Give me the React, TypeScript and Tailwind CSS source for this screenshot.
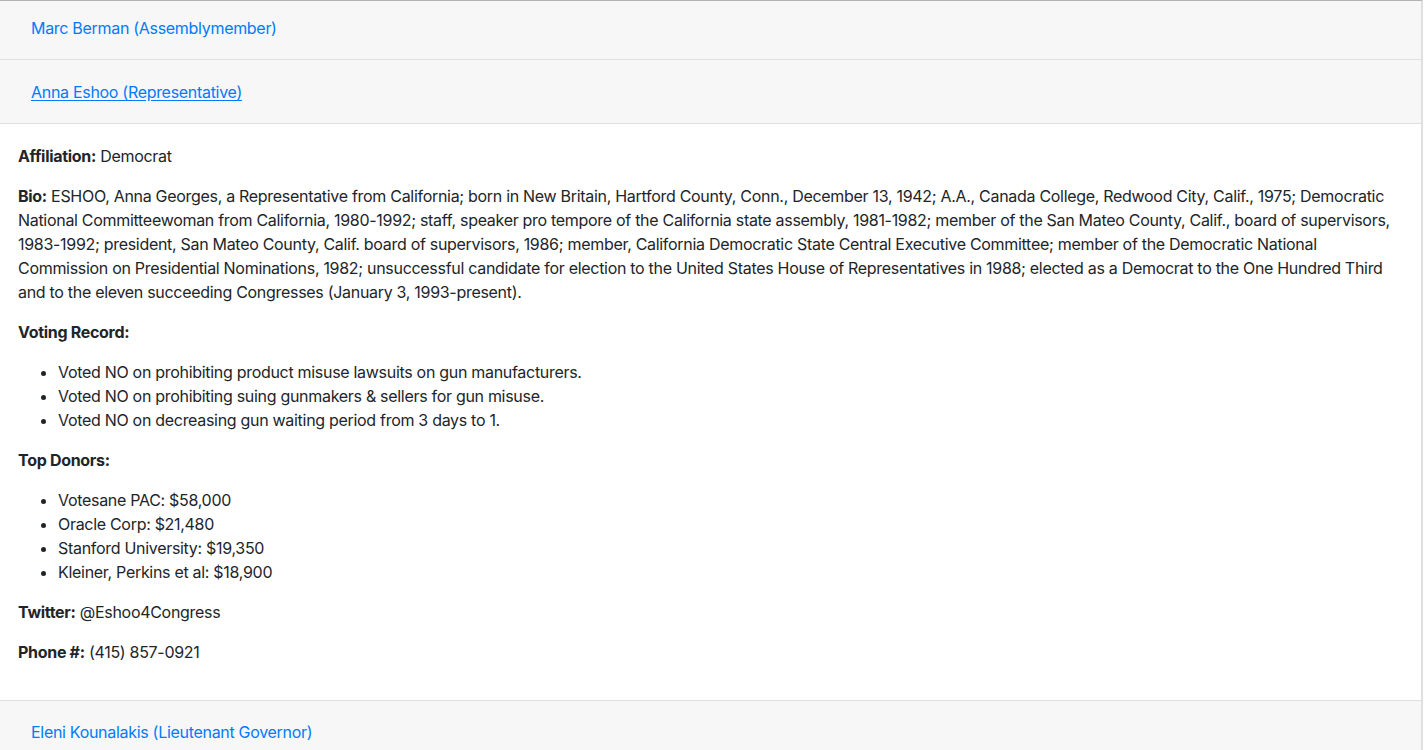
import React from "react";

const font = { fontFamily: "Inter, 'Noto Sans', sans-serif" };

function Header({ label, underline, cls }: { label: string; underline?: boolean; cls: string }) {
  return (
    <div className={`bg-[#f7f7f7] border-b border-[#dfdfdf] pl-[31px] ${cls}`}>
      <span className={`text-[#007bff] text-[16px] leading-6 ${underline ? "underline underline-offset-2" : ""}`}>{label}</span>
    </div>
  );
}

export default function App() {
  return (
    <div className="bg-white min-h-[750px] text-[#212529] text-[16px] leading-6 tracking-[-0.3px]" style={font}>
      <div className="w-[1423px] border-r-2 border-[#dfdfdf] border-t border-t-[#b3b3b3]">
        <Header label="Marc Berman (Assemblymember)" cls="h-[59px] pt-[15px]" />
        <Header label="Anna Eshoo (Representative)" underline cls="h-[64px] pt-[20px]" />
        <div className="pt-5 pb-5 pl-[18px] pr-5 border-b border-[#dfdfdf]">
          <p className="mb-4"><b>Affiliation:</b> Democrat</p>
          <p className="mb-4">
            <b>Bio:</b> ESHOO, Anna Georges, a Representative from California; born in New Britain, Hartford County, Conn., December 13, 1942; A.A., Canada College, Redwood City, Calif., 1975; Democratic National Committeewoman from California, 1980-1992; staff, speaker pro tempore of the California state assembly, 1981-1982; member of the San Mateo County, Calif., board of supervisors, 1983-1992; president, San Mateo County, Calif. board of supervisors, 1986; member, California Democratic State Central Executive Committee; member of the Democratic National Commission on Presidential Nominations, 1982; unsuccessful candidate for election to the United States House of Representatives in 1988; elected as a Democrat to the One Hundred Third and to the eleven succeeding Congresses (January 3, 1993-present).
          </p>
          <p className="mb-4"><b>Voting Record:</b></p>
          <ul className="list-disc pl-10 mb-4">
            <li>Voted NO on prohibiting product misuse lawsuits on gun manufacturers.</li>
            <li>Voted NO on prohibiting suing gunmakers &amp; sellers for gun misuse.</li>
            <li>Voted NO on decreasing gun waiting period from 3 days to 1.</li>
          </ul>
          <p className="mb-4"><b>Top Donors:</b></p>
          <ul className="list-disc pl-10 mb-4">
            <li>Votesane PAC: $58,000</li>
            <li>Oracle Corp: $21,480</li>
            <li>Stanford University: $19,350</li>
            <li>Kleiner, Perkins et al: $18,900</li>
          </ul>
          <p className="mb-4"><b>Twitter:</b> @Eshoo4Congress</p>
          <p className="mb-4"><b>Phone #:</b> (415) 857-0921</p>
        </div>
        <Header label="Eleni Kounalakis (Lieutenant Governor)" cls="h-[64px] pt-[19px]" />
      </div>
    </div>
  );
}
